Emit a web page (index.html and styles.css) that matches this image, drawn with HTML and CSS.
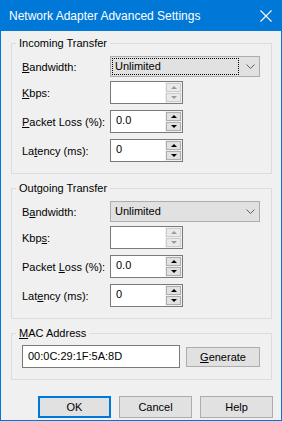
FILE: index.html
```html
<!DOCTYPE html>
<html>
<head>
    <title>Network Adapter Advanced Settings</title>
    <meta name="viewport" content="width=device-width, initial-scale=1.0">
    <link rel="stylesheet" href="styles.css">
</head>
<body>
    <div class="window">
        <!-- Title bar -->
        <div class="titlebar">
            <span class="title">Network Adapter Advanced Settings</span>
            <svg class="close" width="12" height="12" viewBox="0 0 12 12">
                <path d="M0.5 0.5 L11.5 11.5 M11.5 0.5 L0.5 11.5" stroke="#fff" stroke-width="1.1" fill="none"/>
            </svg>
        </div>

        <div class="client">
            <!-- Incoming -->
            <fieldset class="group">
                <legend>Incoming Transfer</legend>
                <div class="rows">
                    <div class="row row-combo">
                        <label><u>B</u>andwidth:</label>
                        <div class="combo">
                            <span class="combo-text focused">Unlimited</span>
                            <svg class="chevron" width="9" height="5" viewBox="0 0 9 5"><path d="M0.5 0.5 L4.5 4.5 L8.5 0.5" stroke="#606060" fill="none"/></svg>
                        </div>
                    </div>
                    <div class="row">
                        <label><u>K</u>bps:</label>
                        <div class="spin">
                            <span class="spin-value"></span>
                            <div class="spin-buttons disabled">
                                <span class="spin-btn"><i class="arrow up"></i></span>
                                <span class="spin-btn"><i class="arrow down"></i></span>
                            </div>
                        </div>
                    </div>
                    <div class="row">
                        <label><u>P</u>acket Loss (%):</label>
                        <div class="spin">
                            <span class="spin-value">0.0</span>
                            <div class="spin-buttons">
                                <span class="spin-btn"><i class="arrow up"></i></span>
                                <span class="spin-btn"><i class="arrow down"></i></span>
                            </div>
                        </div>
                    </div>
                    <div class="row">
                        <label>La<u>t</u>ency (ms):</label>
                        <div class="spin">
                            <span class="spin-value">0</span>
                            <div class="spin-buttons">
                                <span class="spin-btn"><i class="arrow up"></i></span>
                                <span class="spin-btn"><i class="arrow down"></i></span>
                            </div>
                        </div>
                    </div>
                </div>
            </fieldset>

            <!-- Outgoing -->
            <fieldset class="group">
                <legend>Outgoing Transfer</legend>
                <div class="rows">
                    <div class="row row-combo">
                        <label>B<u>a</u>ndwidth:</label>
                        <div class="combo">
                            <span class="combo-text">Unlimited</span>
                            <svg class="chevron" width="9" height="5" viewBox="0 0 9 5"><path d="M0.5 0.5 L4.5 4.5 L8.5 0.5" stroke="#606060" fill="none"/></svg>
                        </div>
                    </div>
                    <div class="row">
                        <label>Kbp<u>s</u>:</label>
                        <div class="spin">
                            <span class="spin-value"></span>
                            <div class="spin-buttons disabled">
                                <span class="spin-btn"><i class="arrow up"></i></span>
                                <span class="spin-btn"><i class="arrow down"></i></span>
                            </div>
                        </div>
                    </div>
                    <div class="row">
                        <label>Packet <u>L</u>oss (%):</label>
                        <div class="spin">
                            <span class="spin-value">0.0</span>
                            <div class="spin-buttons">
                                <span class="spin-btn"><i class="arrow up"></i></span>
                                <span class="spin-btn"><i class="arrow down"></i></span>
                            </div>
                        </div>
                    </div>
                    <div class="row">
                        <label>Lat<u>e</u>ncy (ms):</label>
                        <div class="spin">
                            <span class="spin-value">0</span>
                            <div class="spin-buttons">
                                <span class="spin-btn"><i class="arrow up"></i></span>
                                <span class="spin-btn"><i class="arrow down"></i></span>
                            </div>
                        </div>
                    </div>
                </div>
            </fieldset>

            <!-- MAC -->
            <fieldset class="group group-mac">
                <legend><u>M</u>AC Address</legend>
                <div class="mac-row">
                    <div class="edit">00:0C:29:1F:5A:8D</div>
                    <button class="btn btn-generate"><u>G</u>enerate</button>
                </div>
            </fieldset>

            <!-- Dialog buttons -->
            <div class="dialog-buttons">
                <button class="btn btn-default">OK</button>
                <button class="btn">Cancel</button>
                <button class="btn">Help</button>
            </div>
        </div>
    </div>
</body>
</html>
```

FILE: styles.css
```css
body {
    margin: 0;
    padding: 0;
    font-family: 'Segoe UI', 'Liberation Sans', Arial, sans-serif;
    font-size: 12px;
    color: #000;
    background: #f0f0f0;
}

.window {
    width: 282px;
    height: 421px;
    box-sizing: border-box;
    border: 1px solid #0078d7;
    border-top: none;
    background: #f0f0f0;
    display: flex;
    flex-direction: column;
    overflow: hidden;
}

/* Title bar */
.titlebar {
    flex: 0 0 31px;
    background: #0078d7;
    color: #fff;
    display: flex;
    align-items: center;
    justify-content: space-between;
    padding: 0 9px 0 9px;
    margin: 0 -1px;
    font-size: 12px;
}
.titlebar .title {
    padding-top: 1px;
}
.titlebar .close {
    margin-right: 1px;
}

.client {
    padding: 5px 9px 0 10px;
    display: flex;
    flex-direction: column;
    font-size: 11px;
}

/* Group boxes */
.group {
    margin: 0;
    padding: 0;
    border: 1px solid #dcdcdc;
    min-width: 0;
}
.group + .group {
    margin-top: 7px;
}
.group-mac {
    margin-top: 8px;
}
.group legend {
    margin-left: 4px;
    padding: 0 3px;
    line-height: 15px;
}

.rows {
    display: flex;
    flex-direction: column;
    padding: 5px 0 11px 10px;
}
.row {
    display: flex;
    align-items: center;
    margin-top: 6px;
}
.row-combo {
    margin-top: 0;
}
.row-combo + .row {
    margin-top: 4px;
}
.row label {
    flex: 0 0 88px;
    white-space: nowrap;
}

/* Combo box */
.combo {
    flex: 0 0 150px;
    height: 21px;
    box-sizing: border-box;
    border: 1px solid #adadad;
    background: #e1e1e1;
    display: flex;
    align-items: center;
    justify-content: space-between;
    padding: 0 4px 0 1px;
}
.combo-text {
    flex: 0 0 127px;
    height: 17px;
    box-sizing: border-box;
    line-height: 15px;
    padding-left: 2px;
    border: 1px solid transparent;
}
.combo-text.focused {
    border: 1px dotted #000;
}

/* Spin edit */
.spin {
    flex: 0 0 73px;
    height: 23px;
    box-sizing: border-box;
    border: 1px solid #7a7a7a;
    background: #fff;
    display: flex;
}
.spin-value {
    flex: 1;
    padding-left: 5px;
    line-height: 19px;
}
.spin-buttons {
    flex: 0 0 17px;
    display: flex;
    flex-direction: column;
    gap: 1px;
    padding: 1px;
    box-sizing: border-box;
    background: #f0f0f0;
}
.spin-btn {
    flex: 1;
    border: 1px solid #adadad;
    background: #e1e1e1;
    display: flex;
    align-items: center;
    justify-content: center;
}
.spin-buttons.disabled .spin-btn {
    border-color: #cccccc;
    background: #eaeaea;
}
.arrow {
    width: 0;
    height: 0;
    border-left: 3px solid transparent;
    border-right: 3px solid transparent;
}
.arrow.up {
    border-bottom: 3px solid #000;
}
.arrow.down {
    border-top: 3px solid #000;
}
.spin-buttons.disabled .arrow.up {
    border-bottom-color: #9a9a9a;
}
.spin-buttons.disabled .arrow.down {
    border-top-color: #9a9a9a;
}

/* MAC address */
.mac-row {
    display: flex;
    align-items: center;
    gap: 6px;
    padding: 4px 0 11px 10px;
}
.edit {
    flex: 0 0 158px;
    height: 23px;
    box-sizing: border-box;
    border: 1px solid #7a7a7a;
    background: #fff;
    padding-left: 5px;
    line-height: 20px;
}

/* Buttons */
.btn {
    font-family: inherit;
    font-size: 11px;
    color: #000;
    background: #e1e1e1;
    border: 1px solid #adadad;
    height: 22px;
    width: 73px;
    padding: 0;
    margin: 0;
}
.btn-generate {
    width: 74px;
    height: 20px;
}
.btn-default {
    border: 2px solid #0078d7;
}

.dialog-buttons {
    display: flex;
    justify-content: flex-end;
    gap: 8px;
    margin: 16px -1px 0 0;
}
```
